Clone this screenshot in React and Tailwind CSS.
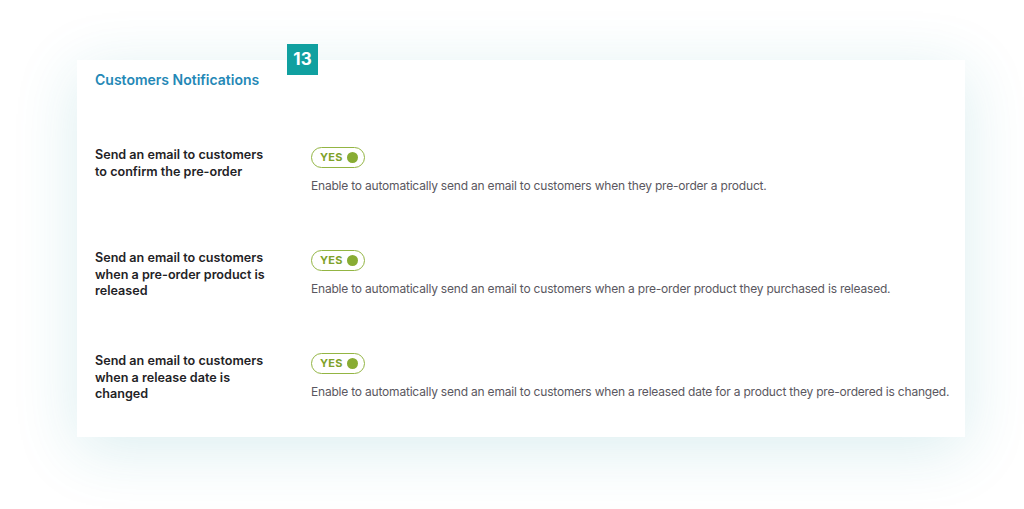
const ROWS = [
  {
    label: 'Send an email to customers to confirm the pre-order',
    desc: 'Enable to automatically send an email to customers when they pre-order a product.',
  },
  {
    label: 'Send an email to customers when a pre-order product is released',
    desc: 'Enable to automatically send an email to customers when a pre-order product they purchased is released.',
  },
  {
    label: 'Send an email to customers when a release date is changed',
    desc: 'Enable to automatically send an email to customers when a released date for a product they pre-ordered is changed.',
  },
]

function YesToggle() {
  return (
    <span className="inline-flex h-[21px] w-[54px] items-center justify-between rounded-full border-[1.5px] border-[#93b543] pl-[8px] pr-[6px]">
      <span className="text-[11px] font-bold leading-none tracking-[0.02em] text-[#7fa22a]">YES</span>
      <span className="h-[11px] w-[11px] rounded-full bg-[#88ac33]" />
    </span>
  )
}

function SettingRow({ label, desc, last }) {
  return (
    <div className={`flex ${last ? '' : 'h-[103px]'}`}>
      <div className="w-[216px] shrink-0">
        <p className="max-w-[178px] text-[12.6px] font-semibold leading-[16.5px] text-[#1f2326]">{label}</p>
      </div>
      <div className="flex flex-col items-start">
        <YesToggle />
        <p className="mt-[10px] whitespace-nowrap text-[12px] leading-[16px] tracking-[-0.2px] text-[#5a5760]">{desc}</p>
      </div>
    </div>
  )
}

export default function App() {
  return (
    <div className="h-[509px] w-[1024px] overflow-hidden bg-white pl-[77px] pt-[60px]" style={{ fontFamily: 'Inter, "Noto Sans", sans-serif' }}>
      <div className="relative w-[888px] bg-white px-[18px] pb-[34px] pt-[11px] shadow-[0_12px_60px_rgba(30,150,160,0.16)]">
        <div className="absolute left-[210px] top-[-16px] flex h-[31px] w-[31px] items-center justify-center bg-[#10a0a0] text-[17px] font-bold text-white">
          13
        </div>
        <h2 className="text-[14px] font-semibold leading-[18px] text-[#2488b6]">Customers Notifications</h2>
        <div className="mt-[58px] flex flex-col">
          {ROWS.map((row, i) => (
            <SettingRow key={i} {...row} last={i === ROWS.length - 1} />
          ))}
        </div>
      </div>
    </div>
  )
}
